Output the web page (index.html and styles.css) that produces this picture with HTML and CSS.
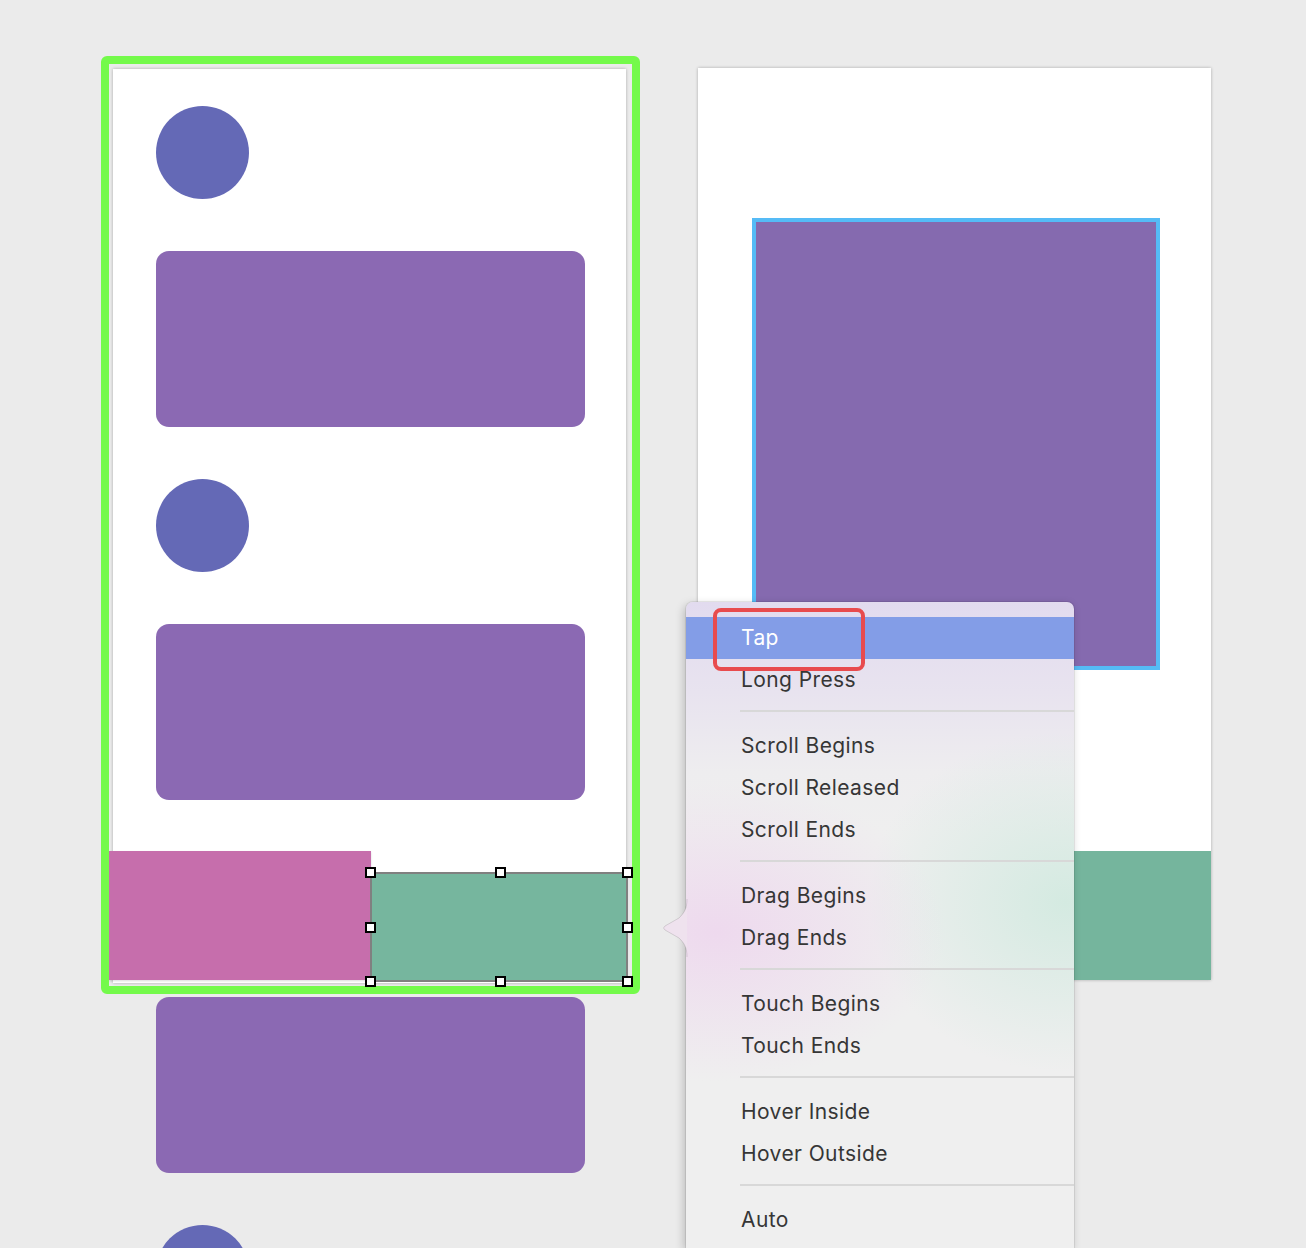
FILE: index.html
```html
<!DOCTYPE html>
<html>
<head>
<meta charset="utf-8">
<link rel="stylesheet" href="styles.css">
</head>
<body>
<div class="canvas">
  <div class="artboard artboard-left">
    <div class="stack">
      <div class="circle"></div>
      <div class="block"></div>
      <div class="circle"></div>
      <div class="block"></div>
      <div class="circle"></div>
      <div class="block"></div>
      <div class="circle"></div>
    </div>
    <div class="pink-layer"></div>
    <div class="green-layer">
      <span class="handle h-tl"></span>
      <span class="handle h-tc"></span>
      <span class="handle h-tr"></span>
      <span class="handle h-ml"></span>
      <span class="handle h-mr"></span>
      <span class="handle h-bl"></span>
      <span class="handle h-bc"></span>
      <span class="handle h-br"></span>
    </div>
  </div>
  <div class="artboard artboard-right">
    <div class="square"></div>
    <div class="footer-strip"></div>
  </div>

  <div class="selection-frame"></div>

  <div class="menu">
    <svg class="menu-arrow" width="26" height="58" viewBox="0 0 26 58">
      <path d="M25 0 C25 10 22 14 17 19 L3 27 Q0 29 3 31 L17 39 C22 44 25 48 25 58 Z" fill="#efe2ee"/>
      <path d="M25 0 C25 10 22 14 17 19 L3 27 Q0 29 3 31 L17 39 C22 44 25 48 25 58" fill="none" stroke="rgba(0,0,0,0.12)" stroke-width="1"/>
    </svg>
    <div class="menu-list">
      <div class="item active">Tap</div>
      <div class="item">Long Press</div>
      <div class="sep"></div>
      <div class="item">Scroll Begins</div>
      <div class="item">Scroll Released</div>
      <div class="item">Scroll Ends</div>
      <div class="sep"></div>
      <div class="item">Drag Begins</div>
      <div class="item">Drag Ends</div>
      <div class="sep"></div>
      <div class="item">Touch Begins</div>
      <div class="item">Touch Ends</div>
      <div class="sep"></div>
      <div class="item">Hover Inside</div>
      <div class="item">Hover Outside</div>
      <div class="sep"></div>
      <div class="item">Auto</div>
    </div>
    <div class="tap-marker"></div>
  </div>
</div>
</body>
</html>
```

FILE: styles.css
```css
html, body {
  margin: 0;
  padding: 0;
  background: #ebebeb;
  overflow: hidden;
  width: 1306px;
  height: 1248px;
}

.canvas {
  position: relative;
  display: flex;
  align-items: flex-start;
  padding-top: 68px;
  width: 1306px;
  height: 1248px;
  box-sizing: border-box;
  overflow: hidden;
}

.artboard {
  position: relative;
  background: #ffffff;
  box-shadow: 0 0 3px rgba(0, 0, 0, 0.28);
  flex: none;
}

.artboard-left {
  margin-left: 113px;
  margin-top: 1px;
  width: 513px;
  height: 914px;
}

.stack {
  display: flex;
  flex-direction: column;
  gap: 52px;
  padding: 37px 0 0 43px;
}

.circle {
  width: 93px;
  height: 93px;
  border-radius: 50%;
  background: #6469b6;
}

.block {
  width: 429px;
  height: 176px;
  border-radius: 13px;
  background: #8b69b3;
}

.pink-layer {
  position: absolute;
  left: -4px;
  top: 782px;
  width: 262px;
  height: 129px;
  background: #c66eac;
  box-shadow: 0 1px 2px rgba(0, 0, 0, 0.15);
}

.green-layer {
  position: absolute;
  left: 257px;
  top: 803px;
  width: 258px;
  height: 110px;
  box-sizing: border-box;
  background: #76b69e;
  border: 2px solid #808080;
}

.handle {
  position: absolute;
  width: 11px;
  height: 11px;
  box-sizing: border-box;
  background: #ffffff;
  border: 2px solid #000000;
  z-index: 3;
}
.h-tl { left: -7px; top: -7px; }
.h-tc { left: 123px; top: -7px; }
.h-tr { right: -7px; top: -7px; }
.h-ml { left: -7px; top: 48px; }
.h-mr { right: -7px; top: 48px; }
.h-bl { left: -7px; bottom: -7px; }
.h-bc { left: 123px; bottom: -7px; }
.h-br { right: -7px; bottom: -7px; }

.artboard-right {
  margin-left: 72px;
  width: 513px;
  height: 912px;
  display: flex;
  flex-direction: column;
}

.square {
  margin: 150px 0 0 54px;
  width: 408px;
  height: 452px;
  box-sizing: border-box;
  border: 4px solid #55bbf6;
  background: #856aaf;
}

.footer-strip {
  margin-top: auto;
  height: 129px;
  background: #75b59d;
}

.selection-frame {
  position: absolute;
  left: 101px;
  top: 56px;
  width: 539px;
  height: 938px;
  box-sizing: border-box;
  border: 8px solid #74fa4b;
  border-radius: 6px;
  pointer-events: none;
  z-index: 2;
}

.menu {
  position: absolute;
  left: 686px;
  top: 602px;
  width: 388px;
  height: 646px;
  border-radius: 7px 7px 0 0;
  background:
    radial-gradient(ellipse 230px 150px at 30px 330px, rgba(238, 216, 238, 0.95), rgba(238, 216, 238, 0) 100%),
    radial-gradient(ellipse 200px 170px at 380px 300px, rgba(212, 234, 225, 1), rgba(212, 234, 225, 0) 100%),
    linear-gradient(to bottom, #e2dbef 0px, #e8e3ef 90px, #eeedef 170px, #efefef 230px);
  box-shadow: 0 0 0 1px rgba(0, 0, 0, 0.07), -2px 3px 10px rgba(0, 0, 0, 0.22);
  z-index: 5;
  font-family: "Inter", "Noto Sans", sans-serif;
}

.menu-arrow {
  position: absolute;
  left: -24px;
  top: 297px;
}

.menu-list {
  padding-top: 15px;
}

.item {
  height: 42px;
  line-height: 42px;
  padding-left: 55px;
  font-size: 21px;
  color: #363636;
  letter-spacing: 0.4px;
}

.item.active {
  background: #839de7;
  color: #ffffff;
}

.sep {
  margin: 9px 0 13px 54px;
  height: 2px;
  background: #d8d8d8;
}

.tap-marker {
  position: absolute;
  left: 27px;
  top: 6px;
  width: 152px;
  height: 63px;
  box-sizing: border-box;
  border: 4px solid #e84b4e;
  border-radius: 8px;
}
```
